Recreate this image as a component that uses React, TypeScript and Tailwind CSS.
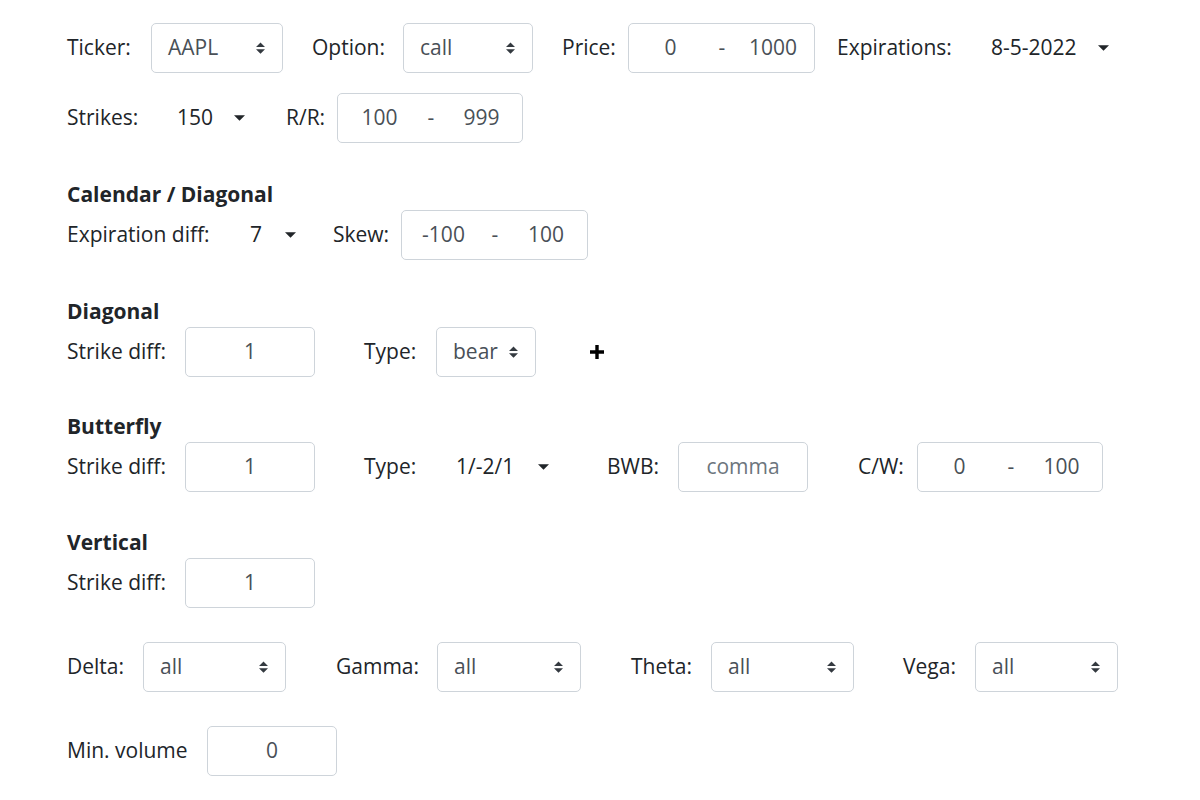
import React from 'react';

const font = { fontFamily: '"Open Sans", "Liberation Sans", sans-serif' };

function UpDown() {
  return (
    <svg width="9" height="12" viewBox="0 0 4 5" className="shrink-0">
      <path d="M2 0L0 2h4zm0 5L0 3h4z" fill="#343a40" />
    </svg>
  );
}

function Caret() {
  return (
    <svg width="11" height="6" viewBox="0 0 10 5" className="shrink-0">
      <path d="M0 0h10L5 5z" fill="#212529" />
    </svg>
  );
}

function Plus() {
  return (
    <svg width="14" height="14" viewBox="0 0 14 14">
      <path d="M5.3 0h3.4v14H5.3zM0 5.3h14v3.4H0z" fill="#000" />
    </svg>
  );
}

function Label({ text, w, ml = '' }: { text: string; w: string; ml?: string }) {
  return <span className={`${w} ${ml} shrink-0 whitespace-nowrap text-[#212529]`}>{text}</span>;
}

function SelectBox({ value, w }: { value: string; w: string }) {
  return (
    <div className={`${w} h-[50px] shrink-0 flex items-center justify-between pl-4 pr-[17px] border border-[#ced4da] rounded-[5px] text-[#495057]`}>
      <span>{value}</span>
      <UpDown />
    </div>
  );
}

function RangeBox({ from, to, w = 'w-[187px]' }: { from: string; to: string; w?: string }) {
  return (
    <div className={`${w} h-[50px] shrink-0 flex items-center border border-[#ced4da] rounded-[5px] text-[#495057]`}>
      <span className="w-[83px] text-center">{from}</span>
      <span className="w-[20px] text-center">-</span>
      <span className="flex-1 text-center">{to}</span>
    </div>
  );
}

function NumBox({ value, placeholder }: { value?: string; placeholder?: string }) {
  return (
    <div className="w-[130px] h-[50px] shrink-0 flex items-center justify-center border border-[#ced4da] rounded-[5px]">
      {value ? <span className="text-[#495057]">{value}</span> : <span className="text-[#6c757d]">{placeholder}</span>}
    </div>
  );
}

function Dropdown({ value, w, gap = 'ml-[22px]' }: { value: string; w: string; gap?: string }) {
  return (
    <div className={`${w} flex items-center shrink-0 text-[#212529]`}>
      <span>{value}</span>
      <span className={gap}><Caret /></span>
    </div>
  );
}

function Heading({ text, mt }: { text: string; mt: string }) {
  return <div className={`${mt} h-[28px] leading-[28px] font-bold text-[#212529]`}>{text}</div>;
}

export default function App() {
  return (
    <div className="w-[1200px] h-[800px] bg-white pt-[23px] pl-[67px] text-[21px]" style={font}>
      <div className="flex items-center h-[50px]">
        <Label text="Ticker:" w="w-[84px]" />
        <SelectBox value="AAPL" w="w-[132px]" />
        <Label text="Option:" w="w-[91px]" ml="ml-[29px]" />
        <SelectBox value="call" w="w-[130px]" />
        <Label text="Price:" w="w-[66px]" ml="ml-[29px]" />
        <RangeBox from="0" to="1000" />
        <Label text="Expirations:" w="w-[154px]" ml="ml-[22px]" />
        <Dropdown value="8-5-2022" w="w-[140px]" gap="ml-[21px]" />
      </div>

      <div className="flex items-center h-[50px] mt-[20px]">
        <Label text="Strikes:" w="w-[110px]" />
        <Dropdown value="150" w="w-[109px]" gap="ml-[21px]" />
        <Label text="R/R:" w="w-[51px]" />
        <RangeBox from="100" to="999" w="w-[186px]" />
      </div>

      <Heading text="Calendar / Diagonal" mt="mt-[37px]" />
      <div className="flex items-center h-[50px] mt-[2px]">
        <Label text="Expiration diff:" w="w-[183px]" />
        <Dropdown value="7" w="w-[83px]" gap="ml-[23px]" />
        <Label text="Skew:" w="w-[68px]" />
        <RangeBox from="-100" to="100" />
      </div>

      <Heading text="Diagonal" mt="mt-[37px]" />
      <div className="flex items-center h-[50px] mt-[2px]">
        <Label text="Strike diff:" w="w-[118px]" />
        <NumBox value="1" />
        <Label text="Type:" w="w-[72px]" ml="ml-[49px]" />
        <SelectBox value="bear" w="w-[100px]" />
        <span className="ml-[54px]"><Plus /></span>
      </div>

      <Heading text="Butterfly" mt="mt-[35px]" />
      <div className="flex items-center h-[50px] mt-[2px]">
        <Label text="Strike diff:" w="w-[118px]" />
        <NumBox value="1" />
        <Label text="Type:" w="w-[92px]" ml="ml-[49px]" />
        <Dropdown value="1/-2/1" w="w-[151px]" gap="ml-[24px]" />
        <Label text="BWB:" w="w-[71px]" />
        <NumBox placeholder="comma" />
        <Label text="C/W:" w="w-[59px]" ml="ml-[50px]" />
        <RangeBox from="0" to="100" w="w-[186px]" />
      </div>

      <Heading text="Vertical" mt="mt-[36px]" />
      <div className="flex items-center h-[50px] mt-[2px]">
        <Label text="Strike diff:" w="w-[118px]" />
        <NumBox value="1" />
      </div>

      <div className="flex items-center h-[50px] mt-[34px]">
        <Label text="Delta:" w="w-[76px]" />
        <SelectBox value="all" w="w-[143px]" />
        <Label text="Gamma:" w="w-[101px]" ml="ml-[50px]" />
        <SelectBox value="all" w="w-[144px]" />
        <Label text="Theta:" w="w-[80px]" ml="ml-[50px]" />
        <SelectBox value="all" w="w-[143px]" />
        <Label text="Vega:" w="w-[72px]" ml="ml-[49px]" />
        <SelectBox value="all" w="w-[143px]" />
      </div>

      <div className="flex items-center h-[50px] mt-[34px]">
        <Label text="Min. volume" w="w-[140px]" />
        <NumBox value="0" />
      </div>
    </div>
  );
}
